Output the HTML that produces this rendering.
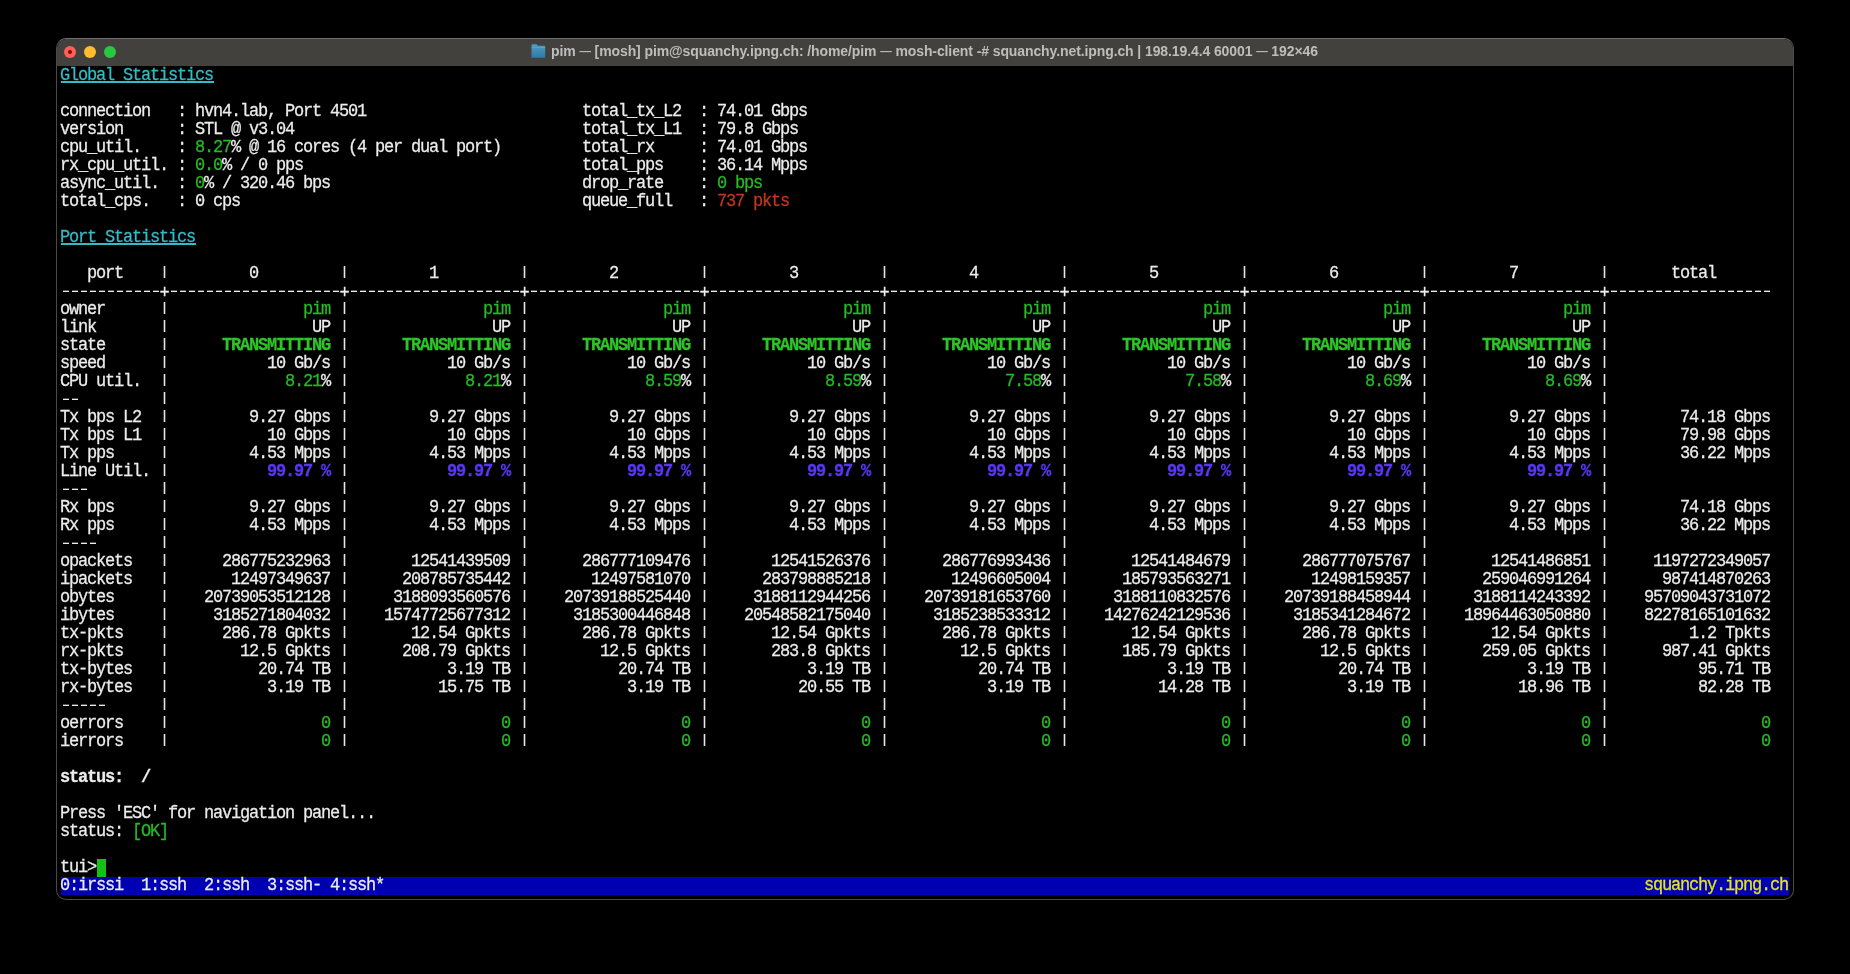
<!DOCTYPE html>
<html><head><meta charset="utf-8"><style>
html,body{margin:0;padding:0;background:#000;width:1850px;height:974px;overflow:hidden}
.win{position:absolute;left:56px;top:38px;width:1738px;height:862px;border-radius:10px;background:#000;box-sizing:border-box;border:1px solid #4a4a4a;border-top-color:#6e6e6e;overflow:hidden}
.tb{position:absolute;left:0;top:0;right:0;height:27px;background:#42413e}
.dot{position:absolute;top:7px;width:12px;height:12px;border-radius:50%}
.title{position:absolute;left:493.8px;top:0;height:27px;line-height:25px;white-space:pre;will-change:transform;font-family:"Liberation Sans",sans-serif;font-weight:bold;font-size:14px;letter-spacing:-0.1px;color:#bdbdbd}
.em{font-size:11.5px;position:relative;top:-1.2px}
.red-in{position:absolute;left:11px;top:11px;width:4px;height:4px;border-radius:50%;background:#8c0000}
.fold{position:absolute;left:473.5px;top:5px}
.term{position:absolute;left:60px;top:67px;width:1728px;height:828px}
.r{position:absolute;will-change:transform;transform:scaleY(1.07);transform-origin:0 13.2px;left:0;height:18px;line-height:18px;white-space:pre;font-family:"Liberation Mono",monospace;font-size:17.0px;letter-spacing:-1.2017px;color:#ececec;-webkit-text-stroke:0.25px currentColor}
.g{color:#25bc24}
.gb{color:#2ec428;font-weight:bold}
.bb{color:#5a35f5;font-weight:bold}
.rd{color:#c23621}
.cy{color:#33bbc8}
.ul{position:absolute;height:2px;background:#33bbc8}
.wb{font-weight:bold}
.cur{}
.sb{width:1728px}
.bar{position:absolute;left:61px;top:877px;width:1728px;height:18px;background:#0000b2}
.curs{position:absolute;left:97px;top:859px;width:9px;height:18px;background:#14c214}
.yl{color:#e5e51e}
.pl{position:relative;top:2px;left:0.5px}
.pi{position:absolute;width:1px;height:12.5px;background:#e6e6e6;box-shadow:-1px 0 0 rgba(230,230,230,.3),1px 0 0 rgba(230,230,230,.3)}
.pp{position:relative;left:1px}
.ds{position:absolute;height:2px;background:linear-gradient(90deg,transparent 0 2.8px,rgba(236,236,236,.35) 2.8px 8.9px,transparent 8.9px 9px) 0 0/9px 1px repeat-x,linear-gradient(90deg,transparent 0 2.8px,#ececec 2.8px 8.9px,transparent 8.9px 9px) 0 1px/9px 1px repeat-x}
</style></head><body>
<div class="win">
<div class="tb">
<div class="dot" style="left:7px;background:#fe5f57"></div>
<div class="dot" style="left:27px;background:#febc2e"></div>
<div class="dot" style="left:47px;background:#28c840"></div>
<div class="red-in"></div>
<svg class="fold" width="15" height="14" viewBox="0 0 15 14"><defs><linearGradient id="fg" x1="0" y1="0" x2="0" y2="1"><stop offset="0" stop-color="#4f9cc6"/><stop offset="1" stop-color="#2f7aa6"/></linearGradient></defs><path d="M0.5 1.2 Q0.5 0.3 1.4 0.3 L5.2 0.3 Q5.9 0.3 6.3 0.9 L6.9 1.8 L13.3 1.8 Q14.2 1.8 14.2 2.7 L14.2 12.9 Q14.2 13.8 13.3 13.8 L1.4 13.8 Q0.5 13.8 0.5 12.9 Z" fill="url(#fg)"/><path d="M0.5 3.4 L14.2 3.4" stroke="#79bcdc" stroke-width="0.7" opacity="0.6"/></svg>
<div class="title">pim <span class="em">—</span> [mosh] pim@squanchy.ipng.ch: /home/pim <span class="em">—</span> mosh-client -# squanchy.net.ipng.ch | 198.19.4.4 60001 <span class="em">—</span> 192×46</div>
</div>
</div>
<div class="bar"></div>
<div class="ul" style="left:61px;top:81px;width:153px"></div>
<div class="ul" style="left:61px;top:243px;width:135px"></div>
<div class="curs"></div>
<div class="term">
<div class="r" style="top:0px"><span class="cy">Global Statistics</span></div>
<div class="r" style="top:18px"></div>
<div class="r" style="top:36px">connection   : hvn4.lab, Port 4501                        total_tx_L2  : 74.01 Gbps</div>
<div class="r" style="top:54px">version      : STL @ v3.04                                total_tx_L1  : 79.8 Gbps</div>
<div class="r" style="top:72px">cpu_util.    : <span class="g">8.27</span>% @ 16 cores (4 per dual port)         total_rx     : 74.01 Gbps</div>
<div class="r" style="top:90px">rx_cpu_util. : <span class="g">0.0</span>% / 0 pps                               total_pps    : 36.14 Mpps</div>
<div class="r" style="top:108px">async_util.  : <span class="g">0</span>% / 320.46 bps                            drop_rate    : <span class="g">0 bps</span></div>
<div class="r" style="top:126px">total_cps.   : 0 cps                                      queue_full   : <span class="rd">737 pkts</span></div>
<div class="r" style="top:144px"></div>
<div class="r" style="top:162px"><span class="cy">Port Statistics</span></div>
<div class="r" style="top:180px"></div>
<div class="r" style="top:198px">   port              0                   1                   2                   3                   4                   5                   6                   7                 total       </div>
<div class="r" style="top:216px">           <span class="pl">+</span>                   <span class="pl">+</span>                   <span class="pl">+</span>                   <span class="pl">+</span>                   <span class="pl">+</span>                   <span class="pl">+</span>                   <span class="pl">+</span>                   <span class="pl">+</span>                   <span class="pl">+</span>                  </div>
<div class="r" style="top:234px">owner                      <span class="g">pim</span>                 <span class="g">pim</span>                 <span class="g">pim</span>                 <span class="g">pim</span>                 <span class="g">pim</span>                 <span class="g">pim</span>                 <span class="g">pim</span>                 <span class="g">pim</span>  </div>
<div class="r" style="top:252px">link                        UP                  UP                  UP                  UP                  UP                  UP                  UP                  UP  </div>
<div class="r" style="top:270px">state             <span class="gb">TRANSMITTING</span>        <span class="gb">TRANSMITTING</span>        <span class="gb">TRANSMITTING</span>        <span class="gb">TRANSMITTING</span>        <span class="gb">TRANSMITTING</span>        <span class="gb">TRANSMITTING</span>        <span class="gb">TRANSMITTING</span>        <span class="gb">TRANSMITTING</span>  </div>
<div class="r" style="top:288px">speed                  10 Gb/s             10 Gb/s             10 Gb/s             10 Gb/s             10 Gb/s             10 Gb/s             10 Gb/s             10 Gb/s  </div>
<div class="r" style="top:306px">CPU util.                <span class="g">8.21</span>%               <span class="g">8.21</span>%               <span class="g">8.59</span>%               <span class="g">8.59</span>%               <span class="g">7.58</span>%               <span class="g">7.58</span>%               <span class="g">8.69</span>%               <span class="g">8.69</span>%  </div>
<div class="r" style="top:324px">                                                                                                                                                                            </div>
<div class="r" style="top:342px">Tx bps L2            9.27 Gbps           9.27 Gbps           9.27 Gbps           9.27 Gbps           9.27 Gbps           9.27 Gbps           9.27 Gbps           9.27 Gbps          74.18 Gbps</div>
<div class="r" style="top:360px">Tx bps L1              10 Gbps             10 Gbps             10 Gbps             10 Gbps             10 Gbps             10 Gbps             10 Gbps             10 Gbps          79.98 Gbps</div>
<div class="r" style="top:378px">Tx pps               4.53 Mpps           4.53 Mpps           4.53 Mpps           4.53 Mpps           4.53 Mpps           4.53 Mpps           4.53 Mpps           4.53 Mpps          36.22 Mpps</div>
<div class="r" style="top:396px">Line Util.             <span class="bb">99.97 %</span>             <span class="bb">99.97 %</span>             <span class="bb">99.97 %</span>             <span class="bb">99.97 %</span>             <span class="bb">99.97 %</span>             <span class="bb">99.97 %</span>             <span class="bb">99.97 %</span>             <span class="bb">99.97 %</span>  </div>
<div class="r" style="top:414px">                                                                                                                                                                            </div>
<div class="r" style="top:432px">Rx bps               9.27 Gbps           9.27 Gbps           9.27 Gbps           9.27 Gbps           9.27 Gbps           9.27 Gbps           9.27 Gbps           9.27 Gbps          74.18 Gbps</div>
<div class="r" style="top:450px">Rx pps               4.53 Mpps           4.53 Mpps           4.53 Mpps           4.53 Mpps           4.53 Mpps           4.53 Mpps           4.53 Mpps           4.53 Mpps          36.22 Mpps</div>
<div class="r" style="top:468px">                                                                                                                                                                            </div>
<div class="r" style="top:486px">opackets          286775232963         12541439509        286777109476         12541526376        286776993436         12541484679        286777075767         12541486851       1197272349057</div>
<div class="r" style="top:504px">ipackets           12497349637        208785735442         12497581070        283798885218         12496605004        185793563271         12498159357        259046991264        987414870263</div>
<div class="r" style="top:522px">obytes          20739053512128       3188093560576      20739188525440       3188112944256      20739181653760       3188110832576      20739188458944       3188114243392      95709043731072</div>
<div class="r" style="top:540px">ibytes           3185271804032      15747725677312       3185300446848      20548582175040       3185238533312      14276242129536       3185341284672      18964463050880      82278165101632</div>
<div class="r" style="top:558px">tx-pkts           286.78 Gpkts         12.54 Gpkts        286.78 Gpkts         12.54 Gpkts        286.78 Gpkts         12.54 Gpkts        286.78 Gpkts         12.54 Gpkts           1.2 Tpkts</div>
<div class="r" style="top:576px">rx-pkts             12.5 Gpkts        208.79 Gpkts          12.5 Gpkts         283.8 Gpkts          12.5 Gpkts        185.79 Gpkts          12.5 Gpkts        259.05 Gpkts        987.41 Gpkts</div>
<div class="r" style="top:594px">tx-bytes              20.74 TB             3.19 TB            20.74 TB             3.19 TB            20.74 TB             3.19 TB            20.74 TB             3.19 TB            95.71 TB</div>
<div class="r" style="top:612px">rx-bytes               3.19 TB            15.75 TB             3.19 TB            20.55 TB             3.19 TB            14.28 TB             3.19 TB            18.96 TB            82.28 TB</div>
<div class="r" style="top:630px">                                                                                                                                                                            </div>
<div class="r" style="top:648px">oerrors                      <span class="g">0</span>                   <span class="g">0</span>                   <span class="g">0</span>                   <span class="g">0</span>                   <span class="g">0</span>                   <span class="g">0</span>                   <span class="g">0</span>                   <span class="g">0</span>                   <span class="g">0</span></div>
<div class="r" style="top:666px">ierrors                      <span class="g">0</span>                   <span class="g">0</span>                   <span class="g">0</span>                   <span class="g">0</span>                   <span class="g">0</span>                   <span class="g">0</span>                   <span class="g">0</span>                   <span class="g">0</span>                   <span class="g">0</span></div>
<div class="r" style="top:684px"></div>
<div class="r" style="top:702px"><span class="wb">status:  /</span></div>
<div class="r" style="top:720px"></div>
<div class="r" style="top:738px">Press &#x27;ESC&#x27; for navigation panel...</div>
<div class="r" style="top:756px">status: <span class="g">[OK]</span></div>
<div class="r" style="top:774px"></div>
<div class="r" style="top:792px">tui&gt;<span class="cur"> </span></div>
<div class="r sb" style="top:810px">0:irssi  1:ssh  2:ssh  3:ssh- 4:ssh*                                                                                                                                            <span class="yl">squanchy.ipng.ch</span></div>
<div class="ds" style="top:223.0px;left:0px;width:99px"></div>
<div class="ds" style="top:223.0px;left:108px;width:171px"></div>
<div class="ds" style="top:223.0px;left:288px;width:171px"></div>
<div class="ds" style="top:223.0px;left:468px;width:171px"></div>
<div class="ds" style="top:223.0px;left:648px;width:171px"></div>
<div class="ds" style="top:223.0px;left:828px;width:171px"></div>
<div class="ds" style="top:223.0px;left:1008px;width:171px"></div>
<div class="ds" style="top:223.0px;left:1188px;width:171px"></div>
<div class="ds" style="top:223.0px;left:1368px;width:171px"></div>
<div class="ds" style="top:223.0px;left:1548px;width:162px"></div>
<div class="ds" style="top:331.0px;left:0px;width:18px"></div>
<div class="ds" style="top:421.0px;left:0px;width:27px"></div>
<div class="ds" style="top:475.0px;left:0px;width:36px"></div>
<div class="ds" style="top:637.0px;left:0px;width:45px"></div>
<div class="pi" style="top:198.9px;left:104px"></div>
<div class="pi" style="top:198.9px;left:284px"></div>
<div class="pi" style="top:198.9px;left:464px"></div>
<div class="pi" style="top:198.9px;left:644px"></div>
<div class="pi" style="top:198.9px;left:824px"></div>
<div class="pi" style="top:198.9px;left:1004px"></div>
<div class="pi" style="top:198.9px;left:1184px"></div>
<div class="pi" style="top:198.9px;left:1364px"></div>
<div class="pi" style="top:198.9px;left:1544px"></div>
<div class="pi" style="top:234.9px;left:104px"></div>
<div class="pi" style="top:234.9px;left:284px"></div>
<div class="pi" style="top:234.9px;left:464px"></div>
<div class="pi" style="top:234.9px;left:644px"></div>
<div class="pi" style="top:234.9px;left:824px"></div>
<div class="pi" style="top:234.9px;left:1004px"></div>
<div class="pi" style="top:234.9px;left:1184px"></div>
<div class="pi" style="top:234.9px;left:1364px"></div>
<div class="pi" style="top:234.9px;left:1544px"></div>
<div class="pi" style="top:252.9px;left:104px"></div>
<div class="pi" style="top:252.9px;left:284px"></div>
<div class="pi" style="top:252.9px;left:464px"></div>
<div class="pi" style="top:252.9px;left:644px"></div>
<div class="pi" style="top:252.9px;left:824px"></div>
<div class="pi" style="top:252.9px;left:1004px"></div>
<div class="pi" style="top:252.9px;left:1184px"></div>
<div class="pi" style="top:252.9px;left:1364px"></div>
<div class="pi" style="top:252.9px;left:1544px"></div>
<div class="pi" style="top:270.9px;left:104px"></div>
<div class="pi" style="top:270.9px;left:284px"></div>
<div class="pi" style="top:270.9px;left:464px"></div>
<div class="pi" style="top:270.9px;left:644px"></div>
<div class="pi" style="top:270.9px;left:824px"></div>
<div class="pi" style="top:270.9px;left:1004px"></div>
<div class="pi" style="top:270.9px;left:1184px"></div>
<div class="pi" style="top:270.9px;left:1364px"></div>
<div class="pi" style="top:270.9px;left:1544px"></div>
<div class="pi" style="top:288.9px;left:104px"></div>
<div class="pi" style="top:288.9px;left:284px"></div>
<div class="pi" style="top:288.9px;left:464px"></div>
<div class="pi" style="top:288.9px;left:644px"></div>
<div class="pi" style="top:288.9px;left:824px"></div>
<div class="pi" style="top:288.9px;left:1004px"></div>
<div class="pi" style="top:288.9px;left:1184px"></div>
<div class="pi" style="top:288.9px;left:1364px"></div>
<div class="pi" style="top:288.9px;left:1544px"></div>
<div class="pi" style="top:306.9px;left:104px"></div>
<div class="pi" style="top:306.9px;left:284px"></div>
<div class="pi" style="top:306.9px;left:464px"></div>
<div class="pi" style="top:306.9px;left:644px"></div>
<div class="pi" style="top:306.9px;left:824px"></div>
<div class="pi" style="top:306.9px;left:1004px"></div>
<div class="pi" style="top:306.9px;left:1184px"></div>
<div class="pi" style="top:306.9px;left:1364px"></div>
<div class="pi" style="top:306.9px;left:1544px"></div>
<div class="pi" style="top:324.9px;left:104px"></div>
<div class="pi" style="top:324.9px;left:284px"></div>
<div class="pi" style="top:324.9px;left:464px"></div>
<div class="pi" style="top:324.9px;left:644px"></div>
<div class="pi" style="top:324.9px;left:824px"></div>
<div class="pi" style="top:324.9px;left:1004px"></div>
<div class="pi" style="top:324.9px;left:1184px"></div>
<div class="pi" style="top:324.9px;left:1364px"></div>
<div class="pi" style="top:324.9px;left:1544px"></div>
<div class="pi" style="top:342.9px;left:104px"></div>
<div class="pi" style="top:342.9px;left:284px"></div>
<div class="pi" style="top:342.9px;left:464px"></div>
<div class="pi" style="top:342.9px;left:644px"></div>
<div class="pi" style="top:342.9px;left:824px"></div>
<div class="pi" style="top:342.9px;left:1004px"></div>
<div class="pi" style="top:342.9px;left:1184px"></div>
<div class="pi" style="top:342.9px;left:1364px"></div>
<div class="pi" style="top:342.9px;left:1544px"></div>
<div class="pi" style="top:360.9px;left:104px"></div>
<div class="pi" style="top:360.9px;left:284px"></div>
<div class="pi" style="top:360.9px;left:464px"></div>
<div class="pi" style="top:360.9px;left:644px"></div>
<div class="pi" style="top:360.9px;left:824px"></div>
<div class="pi" style="top:360.9px;left:1004px"></div>
<div class="pi" style="top:360.9px;left:1184px"></div>
<div class="pi" style="top:360.9px;left:1364px"></div>
<div class="pi" style="top:360.9px;left:1544px"></div>
<div class="pi" style="top:378.9px;left:104px"></div>
<div class="pi" style="top:378.9px;left:284px"></div>
<div class="pi" style="top:378.9px;left:464px"></div>
<div class="pi" style="top:378.9px;left:644px"></div>
<div class="pi" style="top:378.9px;left:824px"></div>
<div class="pi" style="top:378.9px;left:1004px"></div>
<div class="pi" style="top:378.9px;left:1184px"></div>
<div class="pi" style="top:378.9px;left:1364px"></div>
<div class="pi" style="top:378.9px;left:1544px"></div>
<div class="pi" style="top:396.9px;left:104px"></div>
<div class="pi" style="top:396.9px;left:284px"></div>
<div class="pi" style="top:396.9px;left:464px"></div>
<div class="pi" style="top:396.9px;left:644px"></div>
<div class="pi" style="top:396.9px;left:824px"></div>
<div class="pi" style="top:396.9px;left:1004px"></div>
<div class="pi" style="top:396.9px;left:1184px"></div>
<div class="pi" style="top:396.9px;left:1364px"></div>
<div class="pi" style="top:396.9px;left:1544px"></div>
<div class="pi" style="top:414.9px;left:104px"></div>
<div class="pi" style="top:414.9px;left:284px"></div>
<div class="pi" style="top:414.9px;left:464px"></div>
<div class="pi" style="top:414.9px;left:644px"></div>
<div class="pi" style="top:414.9px;left:824px"></div>
<div class="pi" style="top:414.9px;left:1004px"></div>
<div class="pi" style="top:414.9px;left:1184px"></div>
<div class="pi" style="top:414.9px;left:1364px"></div>
<div class="pi" style="top:414.9px;left:1544px"></div>
<div class="pi" style="top:432.9px;left:104px"></div>
<div class="pi" style="top:432.9px;left:284px"></div>
<div class="pi" style="top:432.9px;left:464px"></div>
<div class="pi" style="top:432.9px;left:644px"></div>
<div class="pi" style="top:432.9px;left:824px"></div>
<div class="pi" style="top:432.9px;left:1004px"></div>
<div class="pi" style="top:432.9px;left:1184px"></div>
<div class="pi" style="top:432.9px;left:1364px"></div>
<div class="pi" style="top:432.9px;left:1544px"></div>
<div class="pi" style="top:450.9px;left:104px"></div>
<div class="pi" style="top:450.9px;left:284px"></div>
<div class="pi" style="top:450.9px;left:464px"></div>
<div class="pi" style="top:450.9px;left:644px"></div>
<div class="pi" style="top:450.9px;left:824px"></div>
<div class="pi" style="top:450.9px;left:1004px"></div>
<div class="pi" style="top:450.9px;left:1184px"></div>
<div class="pi" style="top:450.9px;left:1364px"></div>
<div class="pi" style="top:450.9px;left:1544px"></div>
<div class="pi" style="top:468.9px;left:104px"></div>
<div class="pi" style="top:468.9px;left:284px"></div>
<div class="pi" style="top:468.9px;left:464px"></div>
<div class="pi" style="top:468.9px;left:644px"></div>
<div class="pi" style="top:468.9px;left:824px"></div>
<div class="pi" style="top:468.9px;left:1004px"></div>
<div class="pi" style="top:468.9px;left:1184px"></div>
<div class="pi" style="top:468.9px;left:1364px"></div>
<div class="pi" style="top:468.9px;left:1544px"></div>
<div class="pi" style="top:486.9px;left:104px"></div>
<div class="pi" style="top:486.9px;left:284px"></div>
<div class="pi" style="top:486.9px;left:464px"></div>
<div class="pi" style="top:486.9px;left:644px"></div>
<div class="pi" style="top:486.9px;left:824px"></div>
<div class="pi" style="top:486.9px;left:1004px"></div>
<div class="pi" style="top:486.9px;left:1184px"></div>
<div class="pi" style="top:486.9px;left:1364px"></div>
<div class="pi" style="top:486.9px;left:1544px"></div>
<div class="pi" style="top:504.9px;left:104px"></div>
<div class="pi" style="top:504.9px;left:284px"></div>
<div class="pi" style="top:504.9px;left:464px"></div>
<div class="pi" style="top:504.9px;left:644px"></div>
<div class="pi" style="top:504.9px;left:824px"></div>
<div class="pi" style="top:504.9px;left:1004px"></div>
<div class="pi" style="top:504.9px;left:1184px"></div>
<div class="pi" style="top:504.9px;left:1364px"></div>
<div class="pi" style="top:504.9px;left:1544px"></div>
<div class="pi" style="top:522.9px;left:104px"></div>
<div class="pi" style="top:522.9px;left:284px"></div>
<div class="pi" style="top:522.9px;left:464px"></div>
<div class="pi" style="top:522.9px;left:644px"></div>
<div class="pi" style="top:522.9px;left:824px"></div>
<div class="pi" style="top:522.9px;left:1004px"></div>
<div class="pi" style="top:522.9px;left:1184px"></div>
<div class="pi" style="top:522.9px;left:1364px"></div>
<div class="pi" style="top:522.9px;left:1544px"></div>
<div class="pi" style="top:540.9px;left:104px"></div>
<div class="pi" style="top:540.9px;left:284px"></div>
<div class="pi" style="top:540.9px;left:464px"></div>
<div class="pi" style="top:540.9px;left:644px"></div>
<div class="pi" style="top:540.9px;left:824px"></div>
<div class="pi" style="top:540.9px;left:1004px"></div>
<div class="pi" style="top:540.9px;left:1184px"></div>
<div class="pi" style="top:540.9px;left:1364px"></div>
<div class="pi" style="top:540.9px;left:1544px"></div>
<div class="pi" style="top:558.9px;left:104px"></div>
<div class="pi" style="top:558.9px;left:284px"></div>
<div class="pi" style="top:558.9px;left:464px"></div>
<div class="pi" style="top:558.9px;left:644px"></div>
<div class="pi" style="top:558.9px;left:824px"></div>
<div class="pi" style="top:558.9px;left:1004px"></div>
<div class="pi" style="top:558.9px;left:1184px"></div>
<div class="pi" style="top:558.9px;left:1364px"></div>
<div class="pi" style="top:558.9px;left:1544px"></div>
<div class="pi" style="top:576.9px;left:104px"></div>
<div class="pi" style="top:576.9px;left:284px"></div>
<div class="pi" style="top:576.9px;left:464px"></div>
<div class="pi" style="top:576.9px;left:644px"></div>
<div class="pi" style="top:576.9px;left:824px"></div>
<div class="pi" style="top:576.9px;left:1004px"></div>
<div class="pi" style="top:576.9px;left:1184px"></div>
<div class="pi" style="top:576.9px;left:1364px"></div>
<div class="pi" style="top:576.9px;left:1544px"></div>
<div class="pi" style="top:594.9px;left:104px"></div>
<div class="pi" style="top:594.9px;left:284px"></div>
<div class="pi" style="top:594.9px;left:464px"></div>
<div class="pi" style="top:594.9px;left:644px"></div>
<div class="pi" style="top:594.9px;left:824px"></div>
<div class="pi" style="top:594.9px;left:1004px"></div>
<div class="pi" style="top:594.9px;left:1184px"></div>
<div class="pi" style="top:594.9px;left:1364px"></div>
<div class="pi" style="top:594.9px;left:1544px"></div>
<div class="pi" style="top:612.9px;left:104px"></div>
<div class="pi" style="top:612.9px;left:284px"></div>
<div class="pi" style="top:612.9px;left:464px"></div>
<div class="pi" style="top:612.9px;left:644px"></div>
<div class="pi" style="top:612.9px;left:824px"></div>
<div class="pi" style="top:612.9px;left:1004px"></div>
<div class="pi" style="top:612.9px;left:1184px"></div>
<div class="pi" style="top:612.9px;left:1364px"></div>
<div class="pi" style="top:612.9px;left:1544px"></div>
<div class="pi" style="top:630.9px;left:104px"></div>
<div class="pi" style="top:630.9px;left:284px"></div>
<div class="pi" style="top:630.9px;left:464px"></div>
<div class="pi" style="top:630.9px;left:644px"></div>
<div class="pi" style="top:630.9px;left:824px"></div>
<div class="pi" style="top:630.9px;left:1004px"></div>
<div class="pi" style="top:630.9px;left:1184px"></div>
<div class="pi" style="top:630.9px;left:1364px"></div>
<div class="pi" style="top:630.9px;left:1544px"></div>
<div class="pi" style="top:648.9px;left:104px"></div>
<div class="pi" style="top:648.9px;left:284px"></div>
<div class="pi" style="top:648.9px;left:464px"></div>
<div class="pi" style="top:648.9px;left:644px"></div>
<div class="pi" style="top:648.9px;left:824px"></div>
<div class="pi" style="top:648.9px;left:1004px"></div>
<div class="pi" style="top:648.9px;left:1184px"></div>
<div class="pi" style="top:648.9px;left:1364px"></div>
<div class="pi" style="top:648.9px;left:1544px"></div>
<div class="pi" style="top:666.9px;left:104px"></div>
<div class="pi" style="top:666.9px;left:284px"></div>
<div class="pi" style="top:666.9px;left:464px"></div>
<div class="pi" style="top:666.9px;left:644px"></div>
<div class="pi" style="top:666.9px;left:824px"></div>
<div class="pi" style="top:666.9px;left:1004px"></div>
<div class="pi" style="top:666.9px;left:1184px"></div>
<div class="pi" style="top:666.9px;left:1364px"></div>
<div class="pi" style="top:666.9px;left:1544px"></div>
</div>
</body></html>
